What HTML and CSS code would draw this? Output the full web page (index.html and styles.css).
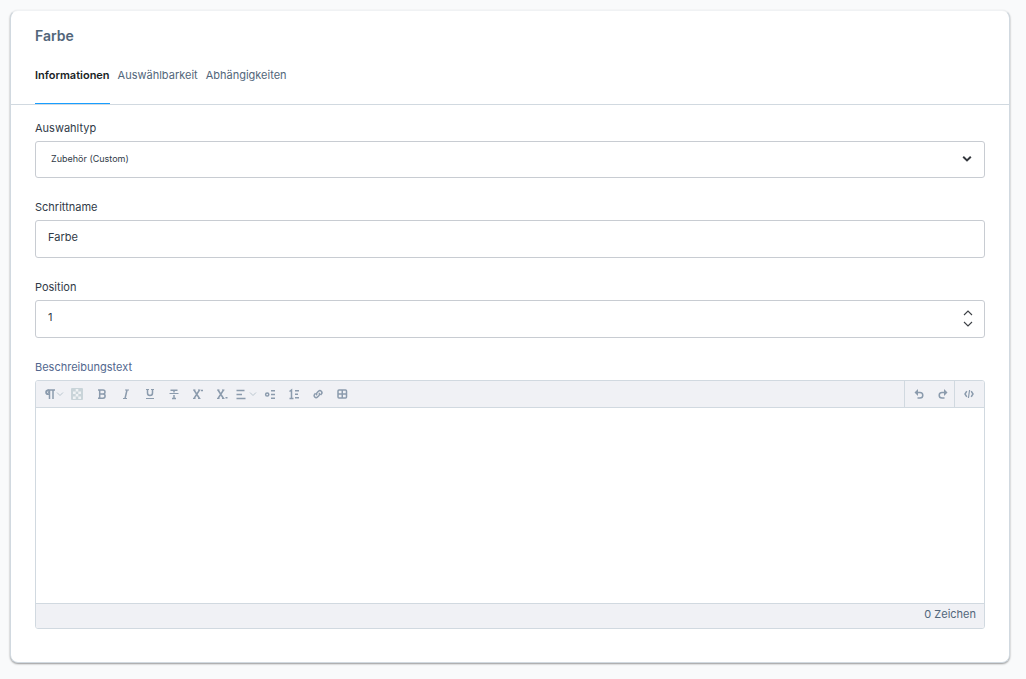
FILE: index.html
```
<!DOCTYPE html>
<html lang="de">
<head>
<meta charset="utf-8">
<title>Farbe</title>
<link rel="stylesheet" href="styles.css">
</head>
<body>
<main class="card">
  <h1 class="title">Farbe</h1>
  <nav class="tabs">
    <a class="tab tab-active" href="#informationen">Informationen</a>
    <a class="tab" href="#auswaehlbarkeit">Auswählbarkeit</a>
    <a class="tab" href="#abhaengigkeiten">Abhängigkeiten</a>
  </nav>
  <form class="form">
    <div class="field">
      <label class="label" for="type">Auswahltyp</label>
      <div class="control">
        <select class="input select" id="type"><option>Zubehör (Custom)</option></select>
        <svg class="chevron" viewBox="0 0 10 8" aria-hidden="true"><path d="M1.200 1.800 5 5.400 8.800 1.800"/></svg>
      </div>
    </div>
    <div class="field">
      <label class="label" for="name">Schrittname</label>
      <input class="input" id="name" type="text" value="Farbe">
    </div>
    <div class="field">
      <label class="label" for="position">Position</label>
      <div class="control">
        <input class="input number" id="position" type="number" value="1">
        <div class="stepper">
          <button class="step" type="button" aria-label="Erhöhen"><svg viewBox="0 0 10 6"><path d="M1 5 5 1 9 5"/></svg></button>
          <button class="step" type="button" aria-label="Verringern"><svg viewBox="0 0 10 6"><path d="M1 1 5 5 9 1"/></svg></button>
        </div>
      </div>
    </div>
    <div class="field">
      <label class="label label-editor" for="description">Beschreibungstext</label>
      <div class="editor">
        <div class="toolbar">
          <div class="tools">
            <button class="tool" type="button" aria-label="Absatz"><svg class="icon" viewBox="0 0 12 12"><path class="fill" d="M5 1.500H4a2.800 2.800 0 0 0 0 5.600h1z"/><path class="cut" d="M4.300 3.200a1.200 1.200 0 0 0 0 2.200"/><path d="M3.500 2H11M5.500 2v9M9 2v9"/></svg><svg class="caret" viewBox="0 0 8 6"><path d="M1 1.500 4 4.500 7 1.500"/></svg></button>
            <button class="tool tool-color" type="button" aria-label="Farbe"><svg class="swatch" viewBox="0 0 12 12"><rect class="dark" width="12" height="12" rx="1"/><path class="light" d="M4.700 1h2.600v2.500H4.700zM2 3.500h2.700V6H2zM7.300 3.500H10V6H7.300zM4.700 6h2.600v2.500H4.700zM2 8.500h2.700V11H2zM7.300 8.500H10V11H7.300z"/></svg></button>
            <button class="tool" type="button" aria-label="Fett"><svg class="icon" viewBox="0 0 12 12"><path d="M2 2h5a1.900 1.900 0 0 1 0 4H3.500M7 6a2 2 0 0 1 0 4.200H2M3.700 2v8"/></svg></button>
            <button class="tool" type="button" aria-label="Kursiv"><svg class="icon" viewBox="0 0 12 12"><path class="thin" d="M5 2h4M3 10.500h4"/><path d="M7 2 5 10.500"/></svg></button>
            <button class="tool" type="button" aria-label="Unterstrichen"><svg class="icon" viewBox="0 0 12 12"><path d="M3.500 1.500V5a2.500 2.500 0 0 0 5 0V1.500"/><path class="thin" d="M2 1.500h3M7 1.500h3M2 10.500h8"/></svg></button>
            <button class="tool" type="button" aria-label="Durchgestrichen"><svg class="icon" viewBox="0 0 12 12"><path class="thin" d="M1.500 5.500h9"/><path d="M2.500 2.200h7M6 2v2.500M6 7v4M4 10.500h4"/></svg></button>
            <button class="tool" type="button" aria-label="Hochgestellt"><svg class="icon" viewBox="0 0 12 12"><path d="m2 2 5.500 8.500M7.500 2 2 10.500M9 2.500h2"/><path class="thin" d="M1 2h2.500M6 2h2.500M1 10.500h2.500M6 10.500h2.500"/></svg></button>
            <button class="tool" type="button" aria-label="Tiefgestellt"><svg class="icon" viewBox="0 0 12 12"><path d="m2 2 5.500 8.500M7.500 2 2 10.500M9.500 9.800h2"/><path class="thin" d="M1 2h2.500M6 2h2.500M1 10.500h2.500M6 10.500h2.500"/></svg></button>
            <button class="tool tool-align" type="button" aria-label="Ausrichtung"><svg class="icon" viewBox="0 0 12 12"><path d="M1.500 2.500h8M1.500 6.500h5.500M1.500 10.500h9"/></svg><svg class="caret caret-apart" viewBox="0 0 8 6"><path d="M1 1.500 4 4.500 7 1.500"/></svg></button>
            <button class="tool" type="button" aria-label="Aufzählung"><svg class="icon" viewBox="0 0 12 12"><circle cx="3.200" cy="6.500" r="1.600"/><path d="M7 2.700h4M7 6.500h4M7 10.300h4"/></svg></button>
            <button class="tool" type="button" aria-label="Nummerierung"><svg class="icon" viewBox="0 0 12 12"><path d="M1.500 3.500 3.500 2v8.500M1.500 10.500h4"/><path d="M7 2.700h4M7 6.300h3M7 9.800h4"/></svg></button>
            <button class="tool" type="button" aria-label="Link"><svg class="icon" viewBox="0 0 12 12"><path d="M5 7.300a1.900 1.900 0 0 1 0-2.600l1.500-1.500a1.900 1.900 0 0 1 2.800 2.800L8.500 7M7 4.900a1.900 1.900 0 0 1 0 2.600L5.500 9A1.900 1.900 0 0 1 2.700 6.200l.8-.9"/></svg></button>
            <button class="tool" type="button" aria-label="Tabelle"><svg class="icon" viewBox="0 0 12 12"><rect x="2" y="2" width="8.500" height="8" rx="1"/><path d="M6.250 2v8M2 6h8.500"/></svg></button>
          </div>
          <div class="group">
            <button class="tool" type="button" aria-label="Rückgängig"><svg class="icon" viewBox="0 0 12 12"><path d="M3 4.500h4a2.800 2.800 0 0 1 0 5.600H4.500"/><path class="fill" d="M5 1v7L1.500 4.500z"/></svg></button>
            <button class="tool" type="button" aria-label="Wiederholen"><svg class="icon" viewBox="0 0 12 12"><path d="M9 4.500H5a2.800 2.800 0 0 0 0 5.600h2.500"/><path class="fill" d="M7 1v7l3.500-3.500z"/></svg></button>
          </div>
          <div class="group">
            <button class="tool" type="button" aria-label="Quelltext"><svg class="icon" viewBox="0 0 12 12"><path d="M3.800 3.200 2 6l1.800 2.800M8.200 3.200 10 6 8.200 8.800"/><path class="thin" d="M6.600 2 5.400 10"/></svg></button>
          </div>
        </div>
        <textarea class="text" id="description"></textarea>
        <div class="status">0 Zeichen</div>
      </div>
    </div>
  </form>
</main>
</body>
</html>
```
FILE: styles.css
```
* { box-sizing: border-box; }
body {
  margin: 0;
  padding: 10px 16px 15px 10px;
  background: #f9fafb;
  color: #303a47;
  font: 11px/16px Inter, "Liberation Sans", sans-serif;
}
button, input, select, textarea { font: inherit; color: inherit; }
.card {
  background: #fff;
  border: 1px solid #d1d9e0;
  border-top-color: #f0f2f4;
  border-radius: 8px;
  box-shadow: 0 1px 2px rgba(0, 0, 0, .4);
}
.title {
  margin: 0;
  padding: 15px 24px 0;
  color: #52667a;
  font-size: 14px;
  font-weight: 600;
  line-height: 20px;
}
.tabs {
  display: flex;
  gap: 8px;
  padding: 10px 24px 0;
  border-bottom: 1px solid #d1d9e0;
}
.tab {
  height: 48px;
  padding-top: 11px;
  color: #52667a;
  text-decoration: none;
}
.tab-active {
  border-bottom: 1px solid #189eff;
  color: #1a1f26;
  font-weight: 600;
}
.form {
  display: flex;
  flex-direction: column;
  gap: 21px;
  padding: 15px 24px 33px;
}
.field { display: flex; flex-direction: column; gap: 5px; }
.label { color: #303a47; }
.label-editor { color: #52678e; }
.control { position: relative; display: flex; }
.input {
  width: 100%;
  height: 38px;
  padding: 0 12px 4px;
  border: 1px solid #c8ccd2;
  border-radius: 3px;
  background: #fff;
  outline: 0;
}
.select {
  height: 37px;
  padding: 0 15px 2px;
  font-size: 9px;
  appearance: none;
}
.number { appearance: textfield; }
.number::-webkit-inner-spin-button { appearance: none; }
.chevron {
  position: absolute;
  top: 14px;
  right: 13px;
  width: 10px;
  height: 8px;
  fill: none;
  stroke: #33373d;
  stroke-width: 2;
}
.stepper {
  position: absolute;
  top: 8px;
  right: 12px;
  display: flex;
  flex-direction: column;
}
.step {
  display: flex;
  padding: 2px 0;
  border: 0;
  background: none;
}
.step svg { width: 10px; height: 6px; fill: none; stroke: #3c4045; stroke-width: 1.1; }
.step + .step { padding-top: 3px; }
.editor {
  display: flex;
  flex-direction: column;
  border: 1px solid #d1d9e0;
  border-radius: 3px;
  overflow: hidden;
}
.toolbar {
  display: flex;
  height: 27px;
  border-bottom: 1px solid #d1d9e0;
  background: #f0f1f5;
}
.tools { display: flex; flex: 1; padding-left: 6px; }
.group {
  display: flex;
  padding-right: 1px;
  border-left: 1px solid #d1d9e0;
}
.group .tool { padding: 0 4px 0 8px; }
.group:last-child .tool { padding-right: 8px; }
.tool {
  display: flex;
  align-items: center;
  min-width: 24px;
  padding: 0 2px;
  border: 0;
  background: none;
}
.tool-color { padding: 0 11px 0 5px; }
.tool-align { margin-left: -3px; width: 27px; padding: 0; }
.icon { width: 12px; height: 12px; fill: none; stroke: #8b9bad; stroke-width: 1.5; }
.caret { width: 8px; height: 6px; fill: none; stroke: #b9c5ce; }
.caret-apart { margin-left: 2px; }
.thin { stroke-width: 1.2; }
.fill { fill: #8b9bad; stroke: none; }
.cut { stroke: #f0f1f5; stroke-width: 1; }
.swatch { width: 12px; height: 12px; }
.light { fill: #eff2f4; }
.dark { fill: #c9d4d9; }
.text {
  height: 195px;
  padding: 12px;
  border: 0;
  outline: 0;
  resize: none;
}
.status {
  padding: 2px 8px 6px;
  border-top: 1px solid #d1d9e0;
  background: #f0f1f5;
  color: #52667a;
  text-align: right;
}
```
